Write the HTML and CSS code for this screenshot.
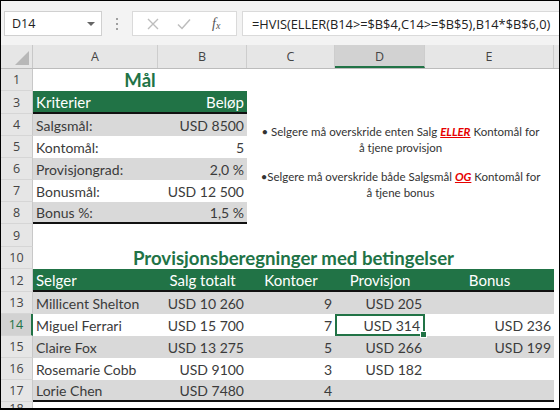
FILE: index.html
```html
<!DOCTYPE html>
<html lang="no">
<head>
<meta charset="utf-8">
<title>Provisjon</title>
<link rel="stylesheet" href="styles.css">
</head>
<body>
<div class="frame">
  <div class="fbar">
    <div class="namebox"><span class="nb-text">D14</span><span class="nb-arrow"></span></div>
    <div class="dots"><i></i><i></i><i></i></div>
    <div class="iconbox">
      <svg class="ic" width="14" height="14" viewBox="0 0 14 14"><path d="M2 2 L12 12 M12 2 L2 12" stroke="#bdbdbd" stroke-width="1.4" fill="none"/></svg>
      <svg class="ic" width="16" height="14" viewBox="0 0 16 14"><path d="M2 7.5 L6 11.5 L14 2.5" stroke="#bdbdbd" stroke-width="1.5" fill="none"/></svg>
      <span class="fx">f<sub>x</sub></span>
    </div>
    <div class="formula">=HVIS(ELLER(B14&gt;=$B$4,C14&gt;=$B$5),B14*$B$6,0)</div>
  </div>
  <div class="sheet">
    <div class="colhead">
      <div class="corner"><span class="tri"></span></div>
      <div class="ch ch-a">A</div>
      <div class="ch ch-b">B</div>
      <div class="ch ch-c">C</div>
      <div class="ch ch-d sel">D</div>
      <div class="ch ch-e">E</div>
      <div class="ch ch-f"></div>
    </div>
    <div class="grid">
      <div class="rh">1</div>
      <div class="title span2">Mål</div>

      <div class="rh">3</div>
      <div class="c hd">Kriterier</div>
      <div class="c hd r">Beløp</div>

      <div class="rh">4</div>
      <div class="c g">Salgsmål:</div>
      <div class="c g r">USD 8500</div>

      <div class="rh">5</div>
      <div class="c">Kontomål:</div>
      <div class="c r">5</div>

      <div class="rh">6</div>
      <div class="c g">Provisjongrad:</div>
      <div class="c g r">2,0 %</div>

      <div class="rh">7</div>
      <div class="c">Bonusmål:</div>
      <div class="c r">USD 12 500</div>

      <div class="rh">8</div>
      <div class="c g end">Bonus %:</div>
      <div class="c g r end">1,5 %</div>

      <div class="notes">
        <p>• Selgere må overskride enten Salg <b>ELLER</b> Kontomål for<br>å tjene provisjon</p>
        <p>•Selgere må overskride både Salgsmål <b>OG</b> Kontomål for<br>å tjene bonus</p>
      </div>

      <div class="rh">9</div>

      <div class="rh">10</div>
      <div class="title span5">Provisjonsberegninger med betingelser</div>

      <div class="rh">12</div>
      <div class="c hd">Selger</div>
      <div class="c hd m">Salg totalt</div>
      <div class="c hd m">Kontoer</div>
      <div class="c hd m">Provisjon</div>
      <div class="c hd m">Bonus</div>

      <div class="rh">13</div>
      <div class="c g">Millicent Shelton</div>
      <div class="c g r">USD 10 260</div>
      <div class="c g r">9</div>
      <div class="c g r">USD 205</div>
      <div class="c g r"></div>

      <div class="rh rh-sel">14</div>
      <div class="c">Miguel Ferrari</div>
      <div class="c r">USD 15 700</div>
      <div class="c r">7</div>
      <div class="c r active">USD 314</div>
      <div class="c r">USD 236</div>

      <div class="rh">15</div>
      <div class="c g">Claire Fox</div>
      <div class="c g r">USD 13 275</div>
      <div class="c g r">5</div>
      <div class="c g r">USD 266</div>
      <div class="c g r">USD 199</div>

      <div class="rh">16</div>
      <div class="c">Rosemarie Cobb</div>
      <div class="c r">USD 9100</div>
      <div class="c r">3</div>
      <div class="c r">USD 182</div>
      <div class="c r"></div>

      <div class="rh">17</div>
      <div class="c g end">Lorie Chen</div>
      <div class="c g r end">USD 7480</div>
      <div class="c g r end">4</div>
      <div class="c g r end"></div>
      <div class="c g r end"></div>

      <div class="rh rh-last">18</div>
    </div>
  </div>
</div>
</body>
</html>
```

FILE: styles.css
```css
* { box-sizing: border-box; }
html, body { margin: 0; padding: 0; }
body { background: #fff; }

.frame {
  width: 560px;
  height: 410px;
  border: 1px solid #000;
  border-bottom-width: 2px;
  background: #f3f3f3;
  overflow: hidden;
  font-family: "Lato", "Liberation Sans", sans-serif;
}

/* formula bar */
.fbar {
  height: 44px;
  display: flex;
  align-items: flex-start;
  padding: 10px 0 0 3px;
}
.namebox {
  width: 98px;
  height: 25px;
  background: #fff;
  border: 1px solid #d0d0d0;
  display: flex;
  align-items: center;
  justify-content: space-between;
  padding: 0 6px 0 7px;
  font-family: "Open Sans", "Liberation Sans", sans-serif;
  font-size: 12.5px;
  color: #222;
}
.nb-arrow {
  width: 0; height: 0;
  border-left: 4px solid transparent;
  border-right: 4px solid transparent;
  border-top: 4px solid #666;
}
.dots {
  width: 30px;
  height: 25px;
  display: flex;
  flex-direction: column;
  align-items: center;
  justify-content: center;
  gap: 3px;
}
.dots i {
  display: block;
  width: 2px; height: 2px;
  background: #a0a0a0;
}
.iconbox {
  width: 105px;
  height: 25px;
  background: #fff;
  border: 1px solid #dadada;
  display: flex;
  align-items: center;
  padding: 0 0 0 13px;
  gap: 16px;
}
.fx {
  font-family: "Liberation Serif", serif;
  font-style: italic;
  font-size: 14px;
  color: #555;
  margin-left: 4px;
  line-height: 1;
}
.fx sub { font-size: 10px; vertical-align: -1px; }
.formula {
  flex: 1;
  height: 25px;
  margin-left: 5px;
  background: #fff;
  border: 1px solid #dadada;
  border-right: none;
  padding: 0 0 0 9px;
  display: flex;
  align-items: center;
  font-family: "Open Sans", "Liberation Sans", sans-serif;
  font-size: 12.8px;
  color: #222;
  white-space: nowrap;
}

/* sheet */
.sheet { background: #fff; height: 363px; }
.colhead {
  display: flex;
  height: 24px;
  background: #e6e6e6;
  border-bottom: 1px solid #bcbcbc;
}
.corner {
  width: 32px;
  border-right: 1px solid #c8c8c8;
  position: relative;
}
.tri {
  position: absolute;
  right: 3px; bottom: 3px;
  width: 0; height: 0;
  border-left: 14px solid transparent;
  border-bottom: 14px solid #b8b8b8;
}
.ch {
  display: flex;
  align-items: center;
  justify-content: center;
  border-right: 1px solid #cdcdcd;
  font-family: "Open Sans", "Liberation Sans", sans-serif;
  font-size: 12.5px;
  color: #444;
}
.ch-a { width: 125px; }
.ch-b { width: 89px; }
.ch-c { width: 88px; }
.ch-d { width: 90px; }
.ch-e { width: 129px; }
.ch-f { flex: 1; border-right: none; }
.ch.sel {
  background: #d2d2d2;
  border-bottom: 2px solid #217346;
  padding-top: 2px;
}

.grid {
  display: grid;
  grid-template-columns: 32px 125px 89px 88px 90px 129px;
  grid-template-rows: 22px 23px 22px 22px 22px 22px 22px 23px 22px 23px 22px 22px 22px 22px 22px 22px;
}
.rh {
  grid-column: 1;
  background: #e6e6e6;
  border-right: 1px solid #c8c8c8;
  border-bottom: 1px solid #d6d6d6;
  display: flex;
  align-items: center;
  justify-content: center;
  font-family: "Open Sans", "Liberation Sans", sans-serif;
  font-size: 12.5px;
  color: #444;
}
.rh-last { align-items: flex-start; padding-top: 1px; line-height: 1; }
.rh-sel {
  background: #d2d2d2;
  color: #217346;
  border-right: 2px solid #217346;
}
.c {
  display: flex;
  align-items: center;
  padding: 0 3px;
  font-size: 14px;
  color: #3b3b3b;
  white-space: nowrap;
}
.c.r { justify-content: flex-end; }
.c.m { justify-content: center; }
.c.g { background: #d9d9d9; }
.c.hd {
  background: #217346;
  color: #fff;
  border-bottom: 2px solid #111;
  font-size: 15px;
}
.c.end { border-bottom: 2px solid #111; }
.active {
  position: relative;
  border: 2px solid #217346;
}
.active::after {
  content: "";
  position: absolute;
  right: -4px; bottom: -4px;
  width: 5px; height: 5px;
  background: #217346;
  border: 1px solid #fff;
}

.title {
  display: flex;
  align-items: center;
  justify-content: center;
  font-weight: 700;
  font-size: 18.6px;
  color: #217346;
}
.span2 { grid-column: span 2; }
.span5 { grid-column: span 5; }

.notes {
  grid-column: 4 / 7;
  grid-row: 3 / 8;
  padding-top: 10px;
  text-align: center;
  font-size: 11.5px;
  line-height: 16px;
  color: #333;
}
.notes p { margin: 0 0 13px; }
.notes b {
  color: #e60000;
  font-style: italic;
  text-decoration: underline;
}
```
